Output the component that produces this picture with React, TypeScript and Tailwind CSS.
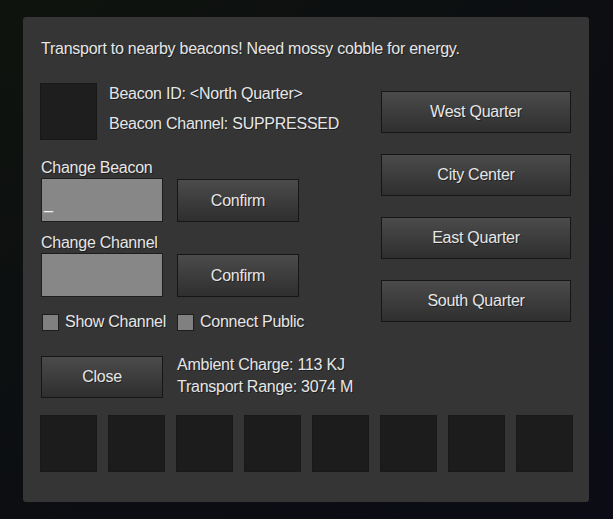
import React from 'react';

const txt = 'text-[#e6e6e6] tracking-[-0.25px] [text-shadow:1px_1px_0_rgba(0,0,0,0.45)]';

const GrayButton: React.FC<{ label: string; className?: string }> = ({ label, className = '' }) => (
  <button
    className={`flex items-center justify-center border border-[#161616] bg-gradient-to-b from-[#4b4b4b] to-[#2f2f2f] text-[16px] leading-[18px] ${txt} ${className}`}
  >
    {label}
  </button>
);

const Checkbox: React.FC<{ label: string }> = ({ label }) => (
  <div className="flex items-center gap-[6px]">
    <div className="h-[17px] w-[17px] border border-[#1e1e1e] bg-[#808080]" />
    <span className={`text-[16px] leading-[18px] ${txt}`}>{label}</span>
  </div>
);

const destinations = ['West Quarter', 'City Center', 'East Quarter', 'South Quarter'];

export default function App() {
  return (
    <div
      className="h-[519px] w-[613px] overflow-hidden bg-gradient-to-br from-[#0f130d] via-[#0c0e12] to-[#0b0c15] pl-[23px] pt-[17px]"
      style={{ fontFamily: '"Liberation Sans", Arial, sans-serif' }}
    >
      <div className="h-[485px] w-[566px] rounded-[3px] bg-[#353535] pl-[18px] pt-[23px]">
        <p className={`text-[16px] leading-[18px] ${txt}`}>
          Transport to nearby beacons! Need mossy cobble for energy.
        </p>

        <div className="mt-[25px] flex">
          {/* left column */}
          <div className="flex w-[340px] flex-col">
            <div className="flex">
              <div className="-ml-px h-[57px] w-[57px] border border-[#181818] bg-[#1e1e1e]" />
              <div className="ml-[12px] mt-[2px] flex flex-col gap-[12px]">
                <span className={`text-[16px] leading-[18px] ${txt}`}>Beacon ID: &lt;North Quarter&gt;</span>
                <span className={`text-[16px] leading-[18px] ${txt}`}>Beacon Channel: SUPPRESSED</span>
              </div>
            </div>

            <span className={`mt-[19px] text-[16px] leading-[18px] ${txt}`}>Change Beacon</span>
            <div className="mt-px flex items-start gap-[14px]">
              <div className="relative h-[44px] w-[122px] border border-[#1e1e1e] bg-[#878787]">
                <span className="absolute bottom-[8px] left-[2px] text-[16px] leading-[18px] text-[#f0f0f0]">_</span>
              </div>
              <GrayButton label="Confirm" className="mt-px h-[43px] w-[122px]" />
            </div>

            <span className={`mt-[12px] text-[16px] leading-[18px] ${txt}`}>Change Channel</span>
            <div className="mt-px flex items-start gap-[14px]">
              <div className="h-[44px] w-[122px] border border-[#1e1e1e] bg-[#878787]" />
              <GrayButton label="Confirm" className="mt-px h-[43px] w-[122px]" />
            </div>

            <div className="ml-px mt-[16px] flex">
              <div className="w-[135px]">
                <Checkbox label="Show Channel" />
              </div>
              <Checkbox label="Connect Public" />
            </div>

            <div className="mt-[25px] flex gap-[14px]">
              <GrayButton label="Close" className="h-[42px] w-[122px]" />
              <div className="flex flex-col gap-[4px]">
                <span className={`text-[16px] leading-[18px] ${txt}`}>Ambient Charge: 113 KJ</span>
                <span className={`text-[16px] leading-[18px] ${txt}`}>Transport Range: 3074 M</span>
              </div>
            </div>
          </div>

          {/* destination buttons */}
          <div className="mt-[8px] flex flex-col gap-[21px]">
            {destinations.map((d) => (
              <GrayButton key={d} label={d} className="h-[42px] w-[190px]" />
            ))}
          </div>
        </div>

        <div className="-ml-px mt-[17px] flex gap-[11px]">
          {Array.from({ length: 8 }).map((_, i) => (
            <div key={i} className="h-[57px] w-[57px] border border-[#191919] bg-[#1c1c1c]" />
          ))}
        </div>
      </div>
    </div>
  );
}
